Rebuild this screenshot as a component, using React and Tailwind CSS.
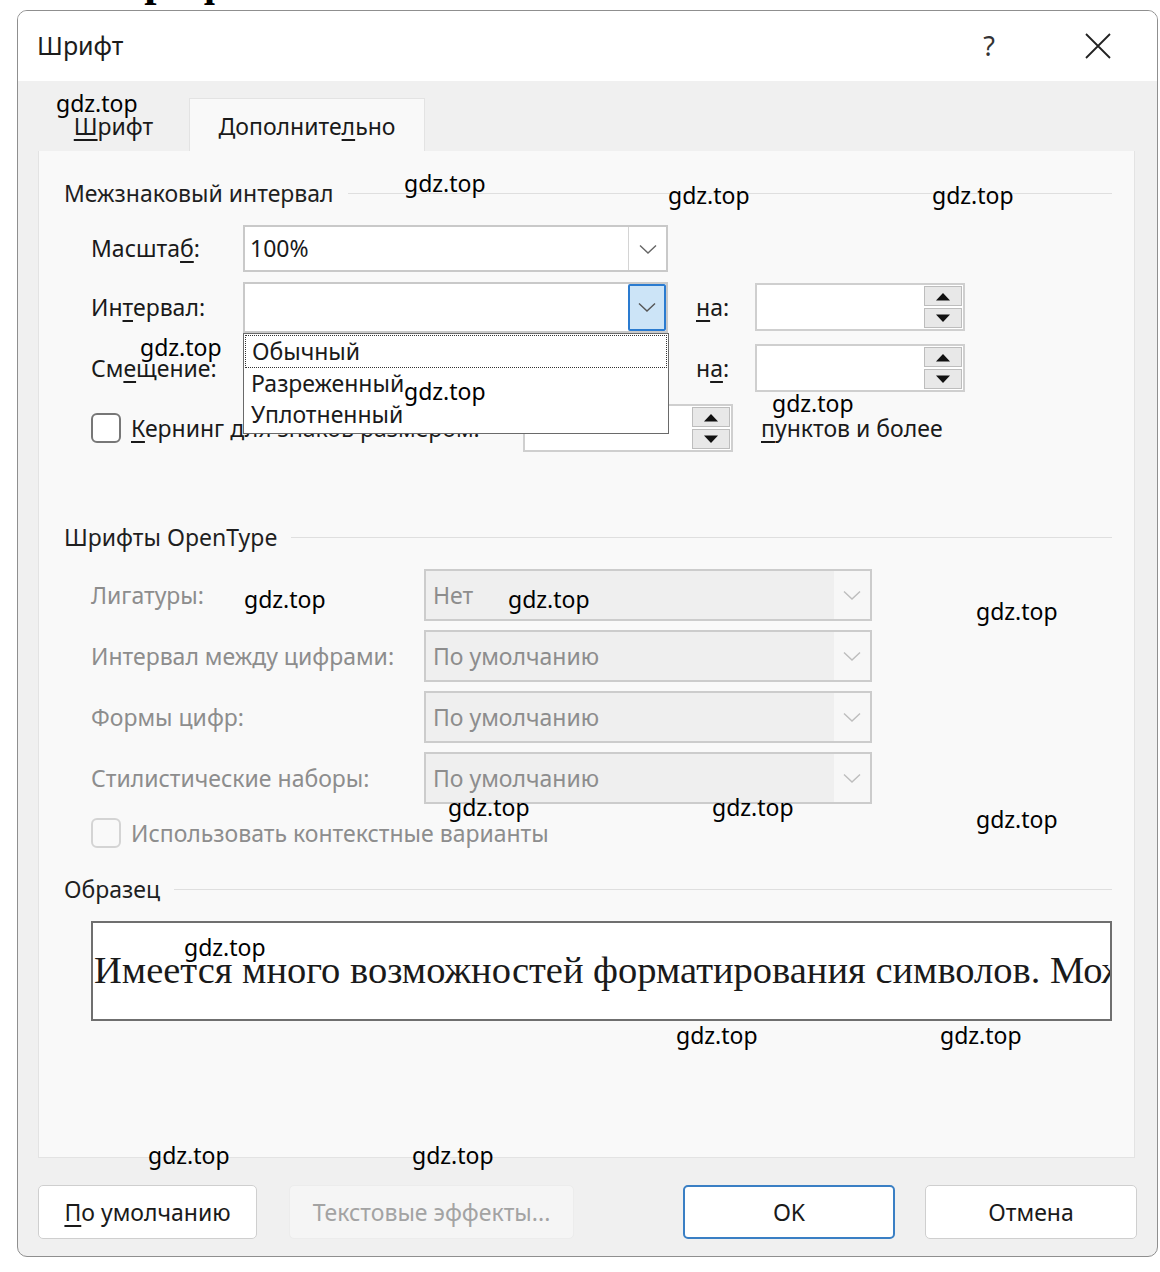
import React from "react";

const Chevron = ({ color = "#555", w = 18 }) => (
  <svg width={w} height="10" viewBox="0 0 18 10">
    <path d="M1 1.5l8 7.5 8-7.5" fill="none" stroke={color} strokeWidth="1.4" />
  </svg>
);

const Tri = ({ up }) => (
  <svg width="16" height="9" viewBox="0 0 16 9">
    {up ? <path d="M1 8.5L8 1l7 7.5z" fill="#111" /> : <path d="M1 0.5L8 8l7-7.5z" fill="#111" />}
  </svg>
);

function Spin({ className = "" }) {
  return (
    <div className={"flex h-[48px] w-[210px] border-2 border-[#cfcfcf] bg-white p-[1px] " + className}>
      <div className="flex-1" />
      <div className="flex w-[38px] flex-col gap-[2px]">
        <div className="flex flex-1 items-center justify-center border border-[#bdbdbd] bg-[#e8e8e8]">
          <Tri up />
        </div>
        <div className="flex flex-1 items-center justify-center border border-[#bdbdbd] bg-[#e8e8e8]">
          <Tri />
        </div>
      </div>
    </div>
  );
}

function Header({ children, className = "" }) {
  return (
    <div className={"flex h-[30px] items-center pl-[25px] pr-[22px] " + className}>
      <span className="text-[23px] text-[#1f1f1f]">{children}</span>
      <div className="ml-[14px] h-px flex-1 bg-[#dfdfdf]" />
    </div>
  );
}

function OTRow({ label, value, className = "" }) {
  return (
    <div className={"flex h-[52px] items-center pl-[52px] " + className}>
      <div className="w-[333px] text-[23px] text-[#8d8d8d]">{label}</div>
      <div className="flex h-[52px] w-[448px] border-2 border-[#cccccc] bg-[#efefef]">
        <div className="flex flex-1 items-center pl-[7px] text-[23px] text-[#8d8d8d]">{value}</div>
        <div className="flex w-[36px] items-center justify-center bg-[#f7f7f7]">
          <Chevron color="#bdbdbd" />
        </div>
      </div>
    </div>
  );
}

const marks = [
  [56, 89], [404, 169], [668, 181], [932, 181], [140, 333], [404, 377], [772, 389],
  [244, 585], [508, 585], [976, 597], [448, 793], [712, 793], [976, 805], [184, 933],
  [676, 1021], [940, 1021], [148, 1141], [412, 1141],
];

export default function App() {
  return (
    <div className="relative h-[1272px] w-[1160px] overflow-hidden bg-white font-['Noto_Sans',sans-serif] text-[#1a1a1a]">
      {/* clipped heading above dialog */}
      <div className="h-[10px] overflow-hidden">
        <div className="-mt-[40px] ml-[96px] font-['Liberation_Serif',serif] text-[44px] font-bold leading-none text-black">
          Шрифт
        </div>
      </div>

      {/* dialog */}
      <div className="ml-[17px] flex h-[1247px] w-[1141px] flex-col overflow-hidden rounded-[10px] border border-[#8f8f8f] bg-[#f0f0f0]">
        {/* title bar */}
        <div className="flex h-[70px] items-center bg-white pl-[19px]">
          <span className="text-[25px] text-[#1c1c1c]">Шрифт</span>
          <div className="flex-1" />
          <span className="mr-[90px] text-[27px] text-[#333]">?</span>
          <svg width="26" height="26" viewBox="0 0 26 26" className="mr-[46px]">
            <path d="M1 1L25 25M25 1L1 25" stroke="#222" strokeWidth="1.8" />
          </svg>
        </div>

        {/* tabs */}
        <div className="flex h-[70px] items-end pl-[20px]">
          <div className="flex h-[53px] w-[151px] items-center justify-center pt-[4px] text-[23px]">
            <span>
              <span className="underline underline-offset-4">Ш</span>рифт
            </span>
          </div>
          <div className="flex h-[53px] w-[236px] items-center justify-center border border-b-0 border-[#e3e3e3] bg-[#f9f9f9] pt-[2px] text-[23px]">
            <span>
              Дополните<span className="underline underline-offset-4">л</span>ьно
            </span>
          </div>
        </div>

        {/* panel */}
        <div className="ml-[20px] flex h-[1007px] w-[1097px] flex-col border border-t-0 border-[#e3e3e3] bg-[#f9f9f9]">
          <Header className="mt-[27px]">Межзнаковый интервал</Header>

          {/* Масштаб */}
          <div className="mt-[17px] flex h-[47px] items-center pl-[52px]">
            <div className="w-[152px] text-[23px]">
              Масшта<span className="underline underline-offset-4">б</span>:
            </div>
            <div className="flex h-[47px] w-[425px] border-2 border-[#c9c9c9] bg-white">
              <div className="flex flex-1 items-center pl-[5px] text-[23px]">100%</div>
              <div className="flex w-[38px] items-center justify-center border-l border-[#d4d4d4]">
                <Chevron color="#666" />
              </div>
            </div>
          </div>

          {/* Интервал */}
          <div className="mt-[10px] flex h-[50px] items-center pl-[52px]">
            <div className="w-[152px] text-[23px]">
              Ин<span className="underline underline-offset-4">т</span>ервал:
            </div>
            <div className="relative z-10 flex h-[51px] w-[425px] border-2 border-[#c9c9c9] bg-white">
              <div className="flex-1" />
              <div className="flex w-[38px] items-center justify-center rounded-[2px] border-2 border-[#2a7bd0] bg-[#cce4f7]">
                <Chevron color="#555" />
              </div>
              {/* open list */}
              <div className="absolute -left-[2px] top-[49px] flex h-[101px] w-[426px] flex-col border border-[#6a6a6a] bg-white pt-[1px] text-[23px]">
                <div className="mx-[1px] flex h-[33px] items-center border border-dotted border-[#333] pl-[6px]">Обычный</div>
                <div className="flex h-[31px] items-center pl-[7px]">Разреженный</div>
                <div className="flex h-[31px] items-center pl-[7px]">Уплотненный</div>
              </div>
            </div>
            <div className="ml-[28px] w-[59px] text-[23px]">
              <span className="underline underline-offset-4">н</span>а:
            </div>
            <Spin />
          </div>

          {/* Смещение */}
          <div className="mt-[12px] flex h-[48px] items-center pl-[52px]">
            <div className="w-[152px] text-[23px]">
              См<span className="underline underline-offset-4">е</span>щение:
            </div>
            <div className="w-[425px]" />
            <div className="ml-[28px] w-[59px] text-[23px]">
              н<span className="underline underline-offset-4">а</span>:
            </div>
            <Spin />
          </div>

          {/* Кернинг */}
          <div className="mt-[12px] flex h-[48px] items-center pl-[52px]">
            <div className="flex w-[432px] items-center">
              <div className="h-[30px] w-[30px] shrink-0 rounded-[6px] border-2 border-[#777] bg-white" />
              <span className="ml-[10px] whitespace-nowrap text-[23px]">
                <span className="underline underline-offset-4">К</span>ернинг для знаков размером:
              </span>
            </div>
            <Spin />
            <span className="ml-[28px] text-[23px]">
              <span className="underline underline-offset-4">п</span>унктов и более
            </span>
          </div>

          <Header className="mt-[70px]">Шрифты OpenType</Header>
          <OTRow className="mt-[17px]" label="Лигатуры:" value="Нет" />
          <OTRow className="mt-[9px]" label="Интервал между цифрами:" value="По умолчанию" />
          <OTRow className="mt-[9px]" label="Формы цифр:" value="По умолчанию" />
          <OTRow className="mt-[9px]" label="Стилистические наборы:" value="По умолчанию" />

          <div className="mt-[14px] flex h-[30px] items-center pl-[52px]">
            <div className="h-[30px] w-[30px] rounded-[6px] border-2 border-[#d4d4d4] bg-[#f9f9f9]" />
            <span className="ml-[10px] text-[23px] text-[#8d8d8d]">Использовать контекстные варианты</span>
          </div>

          <Header className="mt-[26px]">Образец</Header>

          <div className="ml-[52px] mt-[17px] flex h-[100px] w-[1021px] items-center overflow-hidden whitespace-nowrap border-2 border-[#6f6f6f] bg-white pl-[1px]">
            <span className="font-['Liberation_Serif',serif] text-[38.5px] text-[#1a1a1a]">
              Имеется много возможностей форматирования символов. Можно
            </span>
          </div>
        </div>

        {/* buttons */}
        <div className="mt-[27px] flex h-[54px] pl-[20px] text-[23px]">
          <div className="flex w-[219px] items-center justify-center rounded-[5px] border border-[#cfcfcf] bg-white">
            <span>
              <span className="underline underline-offset-4">П</span>о умолчанию
            </span>
          </div>
          <div className="ml-[32px] flex w-[285px] items-center justify-center rounded-[5px] border border-[#ececec] bg-[#f5f5f5] text-[#a3a3a3]">
            Текстовые эффекты...
          </div>
          <div className="ml-[109px] flex w-[212px] items-center justify-center rounded-[5px] border-2 border-[#3a7fc4] bg-white">
            OK
          </div>
          <div className="ml-[30px] flex w-[212px] items-center justify-center rounded-[5px] border border-[#cfcfcf] bg-white">
            Отмена
          </div>
        </div>
      </div>

      {/* watermarks */}
      {marks.map(([x, y], i) => (
        <div
          key={i}
          className="absolute z-20 font-['Noto_Sans',sans-serif] text-[23px] leading-[28px] text-black"
          style={{ left: x, top: y }}
        >
          gdz.top
        </div>
      ))}
    </div>
  );
}
